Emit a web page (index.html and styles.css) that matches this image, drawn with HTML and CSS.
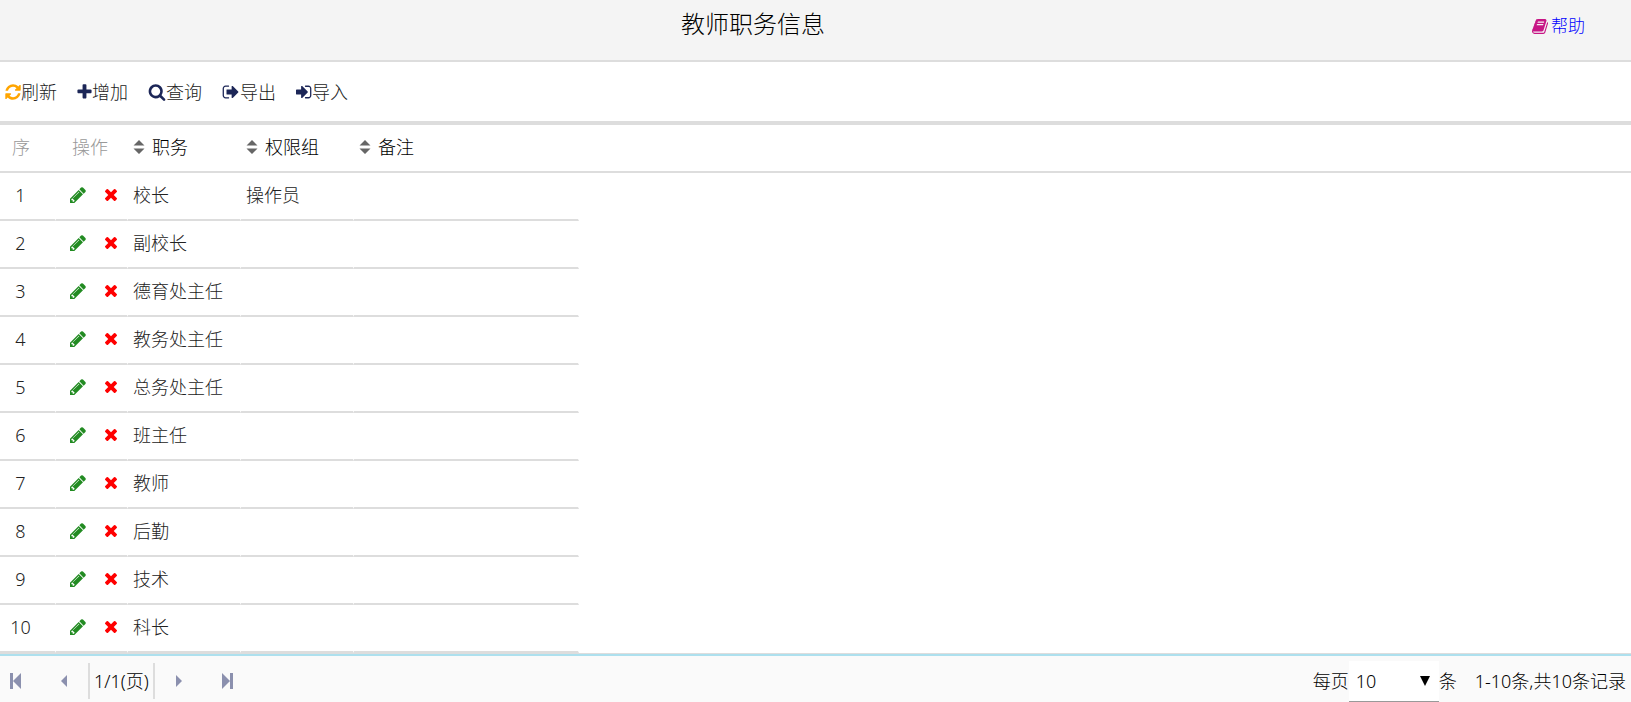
FILE: index.html
```html
<!DOCTYPE html>
<html lang="zh-CN">
<head>
<meta charset="utf-8">
<title>教师职务信息</title>
<link rel="stylesheet" href="styles.css">
</head>
<body>
<svg class="sprite" aria-hidden="true">
  <symbol id="sort" viewBox="0 0 12 16"><path d="M6 1l5.500 5.500H.5zM6 15l5.500-5.500H.5z"/></symbol>
  <symbol id="pencil" viewBox="128 128 1536 1536"><path d="M491 1536l91-91-235-235-91 91v107h128v128h107zm523-928q0-22-22-22-10 0-17 7l-542 542q-7 7-7 17 0 22 22 22 10 0 17-7l542-542q7-7 7-17zm-54-192l416 416-832 832h-416v-416zm683 96q0 53-37 90l-166 166-416-416 166-165q36-38 90-38 53 0 91 38l235 234q37 39 37 91z"/></symbol>
  <symbol id="times" viewBox="302 366 1188 1188"><path d="M1490 1322q0 40-28 68l-136 136q-28 28-68 28t-68-28l-294-294-294 294q-28 28-68 28t-68-28l-136-136q-28-28-28-68t28-68l294-294-294-294q-28-28-28-68t28-68l136-136q28-28 68-28t68 28l294 294 294-294q28-28 68-28t68 28l136 136q28 28 28 68t-28 68l-294 294 294 294q28 28 28 68z"/></symbol>
</svg>
<div class="page">
  <header class="header">
    <h1 class="title">教师职务信息</h1>
    <a class="help" href="#"><svg class="book" viewBox="64 128 1664 1536"><path d="M1703 478q40 57 18 129l-275 906q-19 64-76.500 107.500t-122.500 43.500h-923q-77 0-148.500-53.500t-99.500-131.500q-24-67-2-127 0-4 3-27t4-37q1-8-3-21.500t-3-19.500q2-11 8-21t16.500-23.500 16.500-23.500q23-38 45-91.500t30-91.500q3-10 .5-30t-.5-28q3-11 17-28t17-23q21-36 42-92t25-90q1-9-2.500-32t.5-28q4-13 22-30.500t22-22.500q19-26 42.500-84.500t27.500-96.500q1-8-3-25.500t-2-26.500q2-8 9-18t18-23 17-21q8-12 16.500-30.500t15-35 16-36 19.500-32 26.500-23.500 36-11.500 47.500 5.500l-1 3q38-9 51-9h761q74 0 114 56t18 130l-274 906q-36 119-71.500 153.500t-128.500 34.500h-869q-27 0-38 15-11 16-1 43 24 70 144 70h923q29 0 56-15.500t35-41.500l300-987q7-22 5-57 38 15 59 43zm-1064 2q-4 13 2 22.500t20 9.500h608q13 0 25.500-9.500t16.500-22.500l21-64q4-13-2-22.500t-20-9.500h-608q-13 0-25.500 9.500t-16.500 22.500zm-83 256q-4 13 2 22.500t20 9.500h608q13 0 25.500-9.500t16.500-22.500l21-64q4-13-2-22.500t-20-9.500h-608q-13 0-25.500 9.500t-16.500 22.500z"/></svg>帮助</a>
  </header>
  <nav class="toolbar">
    <button class="tool"><svg class="ico refresh" viewBox="128 0 1536 1792"><path d="M1639 1056q0 5-1 7-64 268-268 434.500t-478 166.500q-146 0-282.500-55t-243.500-157l-129 129q-19 19-45 19t-45-19-19-45v-448q0-26 19-45t45-19h448q26 0 45 19t19 45-19 45l-137 137q71 66 161 102t187 36q134 0 250-65t186-179q11-17 53-117 8-23 30-23h192q13 0 22.500 9.500t9.500 22.500zm25-800v448q0 26-19 45t-45 19h-448q-26 0-45-19t-19-45 19-45l138-138q-148-137-349-137-134 0-250 65t-186 179q-11 17-53 117-8 23-30 23h-199q-13 0-22.500-9.500t-9.500-22.500v-7q65-268 270-434.500t480-166.500q146 0 284 55.500t245 156.500l130-129q19-19 45-19t45 19 19 45z"/></svg>刷新</button>
    <button class="tool"><svg class="ico plus" viewBox="192 0 1408 1792"><path d="M1600 736v192q0 40-28 68t-68 28h-416v416q0 40-28 68t-68 28h-192q-40 0-68-28t-28-68v-416h-416q-40 0-68-28t-28-68v-192q0-40 28-68t68-28h416v-416q0-40 28-68t68-28h192q40 0 68 28t28 68v416h416q40 0 68 28t28 68z"/></svg>增加</button>
    <button class="tool"><svg class="ico search" viewBox="0 0 1792 1792"><path d="M1216 832q0-185-131.500-316.500t-316.500-131.500-316.500 131.500-131.500 316.500 131.500 316.500 316.500 131.500 316.500-131.500 131.500-316.500zm512 832q0 52-38 90t-90 38q-54 0-90-38l-343-342q-179 124-399 124-143 0-273.500-55.500t-225-150-150-225-55.500-273.500 55.500-273.500 150-225 225-150 273.500-55.500 273.500 55.500 225 150 150 225 55.500 273.500q0 220-124 399l343 343q37 37 37 90z"/></svg>查询</button>
    <button class="tool"><svg class="ico out" viewBox="0 0 1792 1792"><path d="M704 1440q0 4 1 20t.5 26.500-3 23.500-10 19.500-20.500 6.500h-320q-119 0-203.500-84.500t-84.500-203.500v-704q0-119 84.500-203.500t203.500-84.500h320q13 0 22.500 9.500t9.500 22.500q0 4 1 20t.5 26.500-3 23.500-10 19.500-20.500 6.500h-320q-66 0-113 47t-47 113v704q0 66 47 113t113 47h312l11.500 1 11.500 3 8 5.500 7 9 2 13.500zm928-544q0 26-19 45l-544 544q-19 19-45 19t-45-19-19-45v-288h-448q-26 0-45-19t-19-45v-384q0-26 19-45t45-19h448v-288q0-26 19-45t45-19 45 19l544 544q19 19 19 45z"/></svg>导出</button>
    <button class="tool"><svg class="ico in" viewBox="128 0 1600 1792"><path d="M1312 896q0 26-19 45l-544 544q-19 19-45 19t-45-19-19-45v-288h-448q-26 0-45-19t-19-45v-384q0-26 19-45t45-19h448v-288q0-26 19-45t45-19 45 19l544 544q19 19 19 45zm352-352v704q0 119-84.500 203.500t-203.500 84.500h-320q-13 0-22.500-9.500t-9.500-22.500q0-4-1-20t-.5-26.500 3-23.500 10-19.500 20.500-6.500h320q66 0 113-47t47-113v-704q0-66-47-113t-113-47h-312l-11.500-1-11.500-3-8-5.500-7-9-2-13.500q0-4-1-20t-.5-26.500 3-23.500 10-19.500 20.500-6.500h320q119 0 203.500 84.500t84.500 203.500z"/></svg>导入</button>
  </nav>
  <main class="content">
    <table class="grid">
      <colgroup><col class="c-no"><col class="c-op"><col class="c-job"><col class="c-group"><col class="c-note"><col></colgroup>
      <thead><tr><th class="num muted">序</th><th class="ops muted">操作</th>
        <th><button class="sort"><svg class="arrows"><use href="#sort"/></svg>职务</button></th>
        <th><button class="sort"><svg class="arrows"><use href="#sort"/></svg>权限组</button></th>
        <th><button class="sort"><svg class="arrows"><use href="#sort"/></svg>备注</button></th><th class="rest"></th></tr></thead>
      <tbody id="rows"></tbody>
    </table>
  </main>
  <footer class="footer">
    <div class="pager">
      <button class="page-btn" aria-label="首页"><svg class="end" viewBox="0 0 12 16"><path d="M0 0h3v16H0zM11 0v16L3 8z"/></svg></button>
      <button class="page-btn" aria-label="上一页"><svg class="step" viewBox="0 0 6 12"><path d="M6 0v12L0 6z"/></svg></button>
      <span class="page-no">1/1(页)</span>
      <button class="page-btn" aria-label="下一页"><svg class="step" viewBox="0 0 6 12"><path d="M0 0v12l6-6z"/></svg></button>
      <button class="page-btn" aria-label="末页"><svg class="end" viewBox="0 0 12 16"><path d="M9 0h3v16H9zM1 0v16l8-8z"/></svg></button>
    </div>
    <div class="summary">
      <label for="size">每页</label>
      <span class="select-box"><select id="size" class="select"><option>10</option><option>20</option><option>50</option></select><svg class="caret" viewBox="0 0 10 10"><path d="M0 0h10L5 10z"/></svg></span>
      <span>条</span>
      <span class="total">1-10条,共10条记录</span>
    </div>
  </footer>
</div>
<script src="rows.js"></script>
</body>
</html>
```
FILE: styles.css
```css
* { box-sizing: border-box; }
body {
  margin: 0;
  font: 300 18px/24px "Noto Sans", "Noto Sans CJK SC", sans-serif;
  color: #222;
  background: #fff;
}
button, select { font: inherit; color: inherit; border: 0; padding: 0; background: none; }
button { cursor: pointer; }
svg { display: block; flex: none; fill: currentColor; }
.sprite { position: absolute; width: 0; height: 0; }
.page { display: flex; flex-direction: column; min-height: 100vh; }
.header {
  display: grid;
  grid-template-columns: 1fr 125px;
  align-items: start;
  height: 62px;
  padding-top: 8px;
  background: #f4f4f4;
  border-bottom: 2px solid #ddd;
}
.title { margin: 0; font-size: 24px; font-weight: 300; line-height: 32px; text-align: center; color: #000; }
.help {
  display: flex;
  align-items: center;
  gap: 3px;
  padding: 6px 0 0 26px;
  font-size: 17px;
  color: #00f;
  text-decoration: none;
}
.book { width: 16px; height: 15px; fill: #c71585; }
.toolbar {
  display: flex;
  align-items: center;
  gap: 20px;
  height: 63px;
  padding: 0 5px;
  border-bottom: 4px solid #ddd;
}
.tool { display: flex; align-items: center; }
.ico { height: 18px; fill: #1c2657; }
.refresh { width: 16px; fill: #ffa500; }
.plus { width: 15px; }
.search, .out { width: 18px; }
.in { width: 16px; }
.content { flex: 1; border-bottom: 1px solid #ddd; }
.grid { width: 100%; table-layout: fixed; border-collapse: separate; border-spacing: 0; }
.c-no { width: 56px; }
.c-op { width: 72px; }
.c-job, .c-group { width: 113px; }
.c-note { width: 225px; }
.grid th, .grid td {
  height: 48px;
  padding: 0 5px 2px;
  border-bottom: 2px solid #ddd;
  font-weight: 300;
  text-align: left;
  white-space: nowrap;
}
.grid td { border-right: 1px solid #fff; }
.grid .none { border: 0; }
.grid .num { padding-right: 14px; padding-left: 0; text-align: center; }
.grid th.ops { padding-left: 16px; }
.grid th { color: #000; }
.grid th.muted { color: #999; }
.sort { display: flex; align-items: center; gap: 7px; }
.arrows { width: 12px; height: 16px; fill: #666; }
.acts { display: flex; align-items: center; justify-content: flex-end; gap: 19px; padding-right: 5px; }
.edit { width: 16px; height: 16px; fill: #228b22; }
.del { width: 12px; height: 12px; fill: #f00; }
.footer {
  display: flex;
  justify-content: space-between;
  height: 48px;
  border-top: 2px solid #ade0ee;
  background: #fafafa;
  color: #000;
}
.pager, .summary { display: flex; align-items: center; }
.pager { padding: 4px 0 0 4px; }
.page-btn {
  display: flex;
  align-items: center;
  justify-content: center;
  width: 24px;
  height: 36px;
  margin-right: 24px;
  color: #8b90ae;
}
.page-btn:nth-child(2) { margin-right: 12px; }
.page-no + .page-btn { margin-left: 12px; }
.end { width: 12px; height: 16px; }
.step { width: 6px; height: 12px; }
.page-no { height: 36px; padding: 0 4px; line-height: 36px; border: solid #ddd; border-width: 0 2px; }
.summary { padding: 4px 5px 0 0; }
.select-box { display: grid; align-items: center; width: 90px; }
.select, .caret { grid-area: 1 / 1; }
.select {
  width: 100%;
  height: 41px;
  padding: 0 7px;
  border-bottom: 1px solid #999;
  border-radius: 0;
  background: #fff;
  appearance: none;
}
.caret { justify-self: end; width: 10px; height: 10px; margin-right: 9px; pointer-events: none; }
.total { margin-left: 18px; }
```
FILE: rows.js
```js
const jobs = ["校长", "副校长", "德育处主任", "教务处主任", "总务处主任", "班主任", "教师", "后勤", "技术", "科长"];
const groups = { "校长": "操作员" };
document.getElementById("rows").innerHTML = jobs.map((job, i) => `
  <tr><td class="num">${i + 1}</td>
  <td><div class="acts"><button aria-label="编辑"><svg class="edit"><use href="#pencil"/></svg></button><button aria-label="删除"><svg class="del"><use href="#times"/></svg></button></div></td>
  <td>${job}</td><td>${groups[job] || ""}</td><td></td><td class="none"></td></tr>`).join("");
```
